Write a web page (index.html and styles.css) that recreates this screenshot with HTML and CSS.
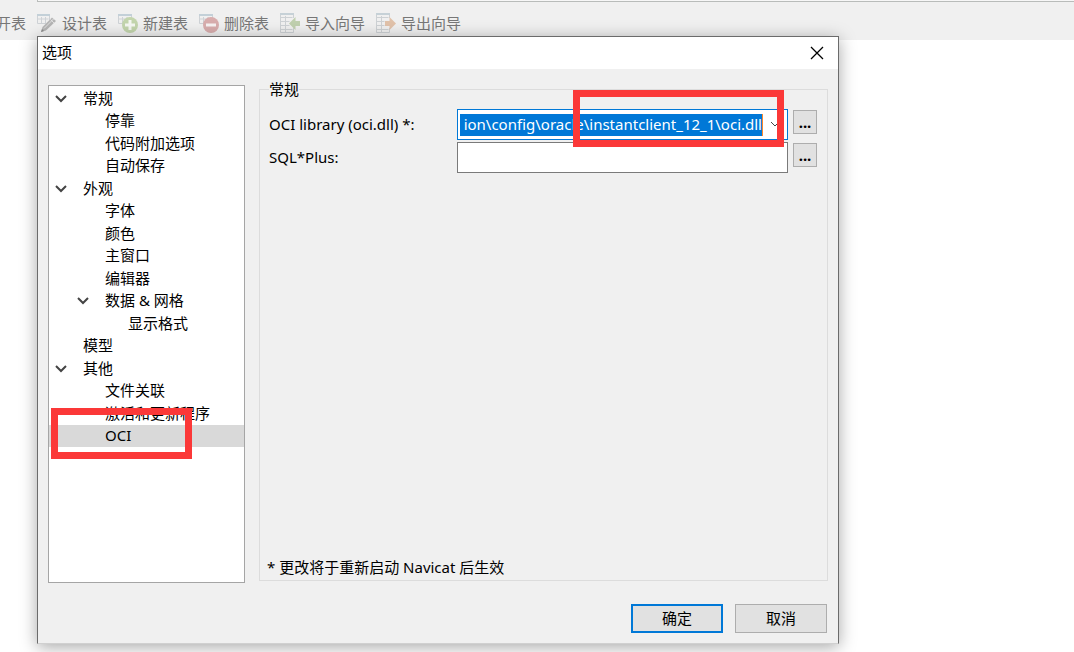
FILE: index.html
```html
<!DOCTYPE html>
<html lang="zh-CN">
<head>
    <meta charset="UTF-8">
    <meta name="viewport" content="width=device-width, initial-scale=1.0">
    <title>选项</title>
    <link rel="stylesheet" href="styles.css">
</head>
<body>
    <!-- 主窗口工具栏 -->
    <header class="main-bar">
        <div class="tab-edge"></div>
        <div class="toolbar">
            <button class="tool">开表</button>
            <button class="tool">
                <svg width="20" height="20" viewBox="0 0 20 20" fill="none">
                    <path d="M9 10.500H.5V1.500h12V7M.5 6h11M4.500 4v6.500M8.500 4v6" stroke="#ced2d6"/>
                    <path d="M0 1h13v2H0z" fill="#c3d0d8"/>
                    <path d="M4 19l1.500-5L15 4.500l4 3.500-10 9.500z" fill="#b5b5b5"/>
                    <path d="M7 15.500L16.500 6M13.500 6.500l3.500 3.500" stroke="#e2e2e2"/>
                    <path d="M4 19l1-3 2 2z" fill="#8c8c8c"/>
                </svg>
                设计表
            </button>
            <button class="tool">
                <svg width="20" height="20" viewBox="0 0 20 20" fill="none">
                    <path d="M8 10.500H.5V1.500h13V6M.5 6h12M4.500 4v6.500M9 4v4" stroke="#ced2d6"/>
                    <path d="M0 1h14v2H0z" fill="#c3d0d8"/>
                    <circle cx="12" cy="12" r="8" fill="#c3d5ad"/>
                    <path d="M12 7v10M7 12h10" stroke="#f5f7f2" stroke-width="3"/>
                </svg>
                新建表
            </button>
            <button class="tool">
                <svg width="20" height="20" viewBox="0 0 20 20" fill="none">
                    <path d="M8 10.500H.5V1.500h13V6M.5 6h12M4.500 4v6.500M9 4v4" stroke="#ced2d6"/>
                    <path d="M0 1h14v2H0z" fill="#c3d0d8"/>
                    <circle cx="12" cy="12" r="8" fill="#d8adad"/>
                    <path d="M7 12h10" stroke="#f7f2f2" stroke-width="3"/>
                </svg>
                删除表
            </button>
            <button class="tool">
                <svg width="20" height="20" viewBox="0 0 20 20" fill="none">
                    <path d="M13.500 5V.5H.5v19h13V15M.5 4.500h12M.5 8.500h9M.5 12.500h9M.5 16.500h12M5.500 3v16" stroke="#cdd1d4"/>
                    <path d="M0 0h14v2H0z" fill="#c6d1d7"/>
                    <path d="M9 10.500L15.500 4v4H20v5h-4.500v4z" fill="#c0d0af"/>
                </svg>
                导入向导
            </button>
            <button class="tool">
                <svg width="20" height="20" viewBox="0 0 20 20" fill="none">
                    <path d="M13.500 5V.5H.5v19h13V15M.5 4.500h12M.5 8.500h8M.5 12.500h8M.5 16.500h12M5.500 3v16" stroke="#cdd1d4"/>
                    <path d="M0 0h14v2H0z" fill="#c6d1d7"/>
                    <path d="M20 10.500L13.500 4v4H9v5h4.500v4z" fill="#e1c2aa"/>
                </svg>
                导出向导
            </button>
        </div>
    </header>

    <!-- 选项对话框 -->
    <div class="dialog" role="dialog" aria-labelledby="dialogTitle">
        <div class="title-bar">
            <h1 id="dialogTitle">选项</h1>
            <button class="close" aria-label="关闭">
                <svg width="14" height="14" viewBox="0 0 14 14"><path d="M1 1l12 12M13 1L1 13" stroke="#000" stroke-width="1.300"/></svg>
            </button>
        </div>

        <div class="dialog-body">
            <ul class="tree">
                <li><button class="toggle" aria-label="折叠"><svg width="12" height="8" viewBox="0 0 12 8"><path d="M1 1l5 5 5-5"/></svg></button>常规</li>
                <li class="level-2">停靠</li>
                <li class="level-2">代码附加选项</li>
                <li class="level-2">自动保存</li>
                <li><button class="toggle" aria-label="折叠"><svg width="12" height="8" viewBox="0 0 12 8"><path d="M1 1l5 5 5-5"/></svg></button>外观</li>
                <li class="level-2">字体</li>
                <li class="level-2">颜色</li>
                <li class="level-2">主窗口</li>
                <li class="level-2">编辑器</li>
                <li class="level-2"><button class="toggle" aria-label="折叠"><svg width="12" height="8" viewBox="0 0 12 8"><path d="M1 1l5 5 5-5"/></svg></button>数据 &amp; 网格</li>
                <li class="level-3">显示格式</li>
                <li>模型</li>
                <li><button class="toggle" aria-label="折叠"><svg width="12" height="8" viewBox="0 0 12 8"><path d="M1 1l5 5 5-5"/></svg></button>其他</li>
                <li class="level-2">文件关联</li>
                <li class="level-2">激活和更新程序</li>
                <li class="level-2 selected">OCI</li>
            </ul>

            <fieldset class="group">
                <legend>常规</legend>
                <div class="field">
                    <label for="ociPath">OCI library (oci.dll) *:</label>
                    <div class="box focused">
                        <input type="text" id="ociPath" class="highlighted" value="ion\config\oracle\instantclient_12_1\oci.dll">
                        <button class="drop" aria-label="展开"><svg width="10" height="7" viewBox="0 0 10 7"><path d="M1 1l4 4 4-4"/></svg></button>
                    </div>
                    <button class="browse">...</button>
                </div>
                <div class="field">
                    <label for="sqlPlus">SQL*Plus:</label>
                    <div class="box">
                        <input type="text" id="sqlPlus">
                    </div>
                    <button class="browse">...</button>
                </div>
                <p class="note">* 更改将于重新启动 Navicat 后生效</p>
            </fieldset>
        </div>

        <div class="actions">
            <button class="btn default">确定</button>
            <button class="btn">取消</button>
        </div>

        <!-- 红框标注 -->
        <div class="mark mark-path"></div>
        <div class="mark mark-oci"></div>
    </div>
</body>
</html>
```

FILE: styles.css
```css
* {
    box-sizing: border-box;
    margin: 0;
    padding: 0;
}

body {
    min-height: 100vh;
    overflow: hidden;
    background-color: #fff;
    color: #000;
    font: 15px/18px "Noto Sans", "Noto Sans CJK SC", sans-serif;
}

button,
input {
    font: inherit;
    color: inherit;
    border: none;
    background: none;
}

/* 工具栏 */
.main-bar {
    height: 40px;
    background-color: #f0f0f0;
}

.tab-edge {
    height: 2px;
    margin-left: 37px;
    background-color: #f7f7f7;
    border-bottom: 1px solid #b9bcba;
    border-left: 1px solid #b9bcba;
}

.toolbar {
    display: flex;
    gap: 11px;
    padding-top: 11px;
    margin-left: -4px;
}

.tool {
    display: flex;
    align-items: center;
    gap: 5px;
    color: #777;
    white-space: nowrap;
}

/* 对话框 */
.dialog {
    position: absolute;
    top: 36px;
    left: 37px;
    width: 802px;
    background-color: #f0f0f0;
    border: 1px solid #6b6b6b;
    border-bottom-color: #d0d0d0;
    box-shadow: 0 3px 16px rgba(0, 0, 0, 0.35);
}

.title-bar {
    display: flex;
    justify-content: space-between;
    align-items: center;
    height: 32px;
    padding: 0 14px 0 4px;
    background-color: #fff;
}

.title-bar h1 {
    padding-bottom: 2px;
    font-size: 15px;
    font-weight: normal;
}

.close {
    display: flex;
}

.dialog-body {
    display: flex;
    align-items: flex-start;
    gap: 14px;
    padding: 16px 10px 0;
}

.tree {
    display: grid;
    grid-template-rows: repeat(16, 1fr);
    flex: 0 0 197px;
    height: 498px;
    padding: 1px 0 135px;
    list-style: none;
    background-color: #fff;
    border: 1px solid #a5a5a5;
}

.tree li {
    display: flex;
    align-items: center;
    padding: 0 0 1px 34px;
    white-space: nowrap;
}

.tree .level-2 {
    padding-left: 56px;
}

.tree .level-3 {
    padding-left: 79px;
}

.tree .selected {
    background-color: #d9d9d9;
}

.toggle {
    display: flex;
    width: 12px;
    margin-left: -28px;
    margin-right: 16px;
    padding-top: 2px;
}

.toggle path {
    fill: none;
    stroke: #444;
    stroke-width: 2;
}

.group {
    display: flex;
    flex-direction: column;
    flex: 1;
    height: 501px;
    margin-top: -5px;
    padding: 11px 10px 4px 9px;
    border: 1px solid #dcdcdc;
}

.group legend {
    line-height: 18px;
}

.field {
    display: flex;
    align-items: flex-start;
    height: 33px;
}

.field label {
    width: 188px;
    padding-top: 6px;
}

.box {
    display: flex;
    align-items: center;
    flex: 1;
    height: 31px;
    margin-right: 5px;
    padding-left: 2px;
    background-color: #fff;
    border: 1px solid #7a7a7a;
}

.box input {
    flex: 1;
    min-width: 0;
    height: 22px;
    padding-bottom: 2px;
    outline: none;
}

.box.focused {
    border-color: #0078d7;
}

.box .highlighted {
    background-color: #0078d7;
    border-right: 1px solid #ff8728;
    color: #fff;
    text-align: right;
}

.drop {
    display: flex;
    justify-content: center;
    width: 24px;
}

.drop path {
    fill: none;
    stroke: #444;
    stroke-width: 1;
}

.browse {
    width: 24px;
    height: 24px;
    margin-top: 1px;
    font-weight: bold;
    background-color: #e1e1e1;
    border: 1px solid #adadad;
}

.note {
    margin-top: auto;
    margin-left: -2px;
}

.actions {
    display: flex;
    justify-content: flex-end;
    gap: 12px;
    padding: 21px 11px 10px;
}

.btn {
    width: 92px;
    height: 29px;
    padding-bottom: 2px;
    background-color: #e1e1e1;
    border: 1px solid #adadad;
}

.btn.default {
    border: 2px solid #0078d7;
}

/* 标注框 */
.mark {
    position: absolute;
    border: 7px solid #fb3838;
    pointer-events: none;
}

.mark-path {
    top: 53px;
    left: 535px;
    width: 211px;
    height: 57px;
}

.mark-oci {
    top: 371px;
    left: 13px;
    width: 141px;
    height: 51px;
}
```
